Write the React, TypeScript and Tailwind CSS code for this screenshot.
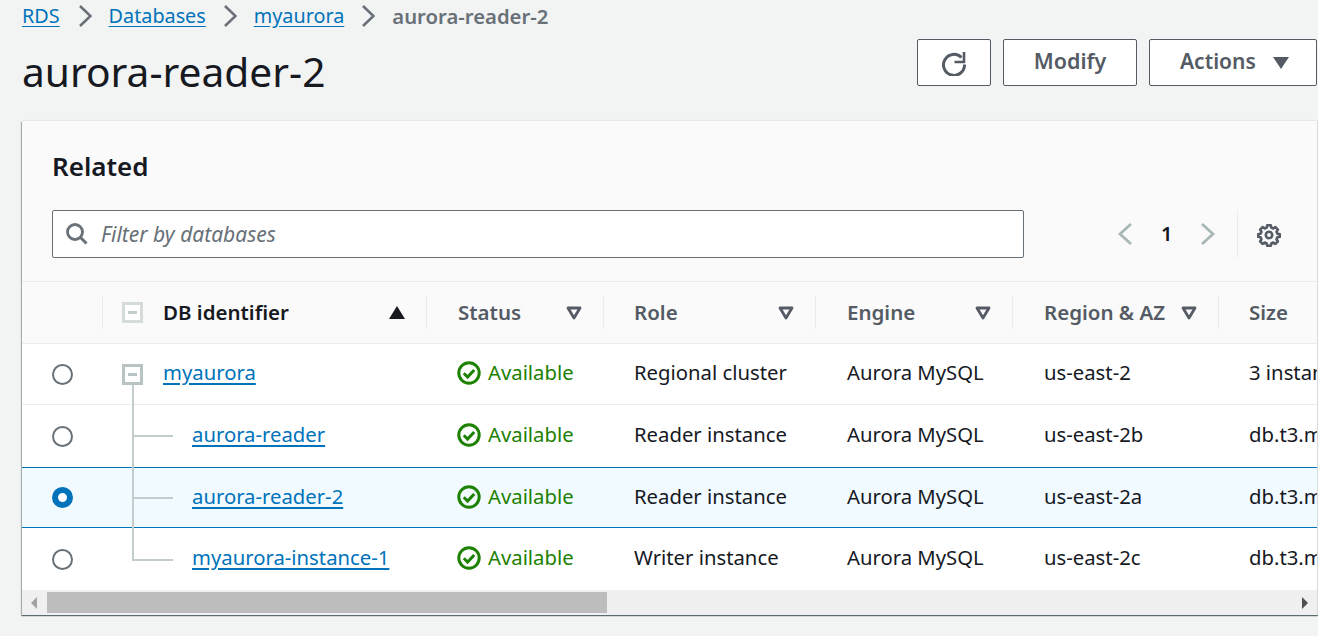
import type { ReactNode } from "react";

const font = "font-['Noto_Sans','Open_Sans',sans-serif]";

type Row = {
  id: string;
  role: string;
  az: string;
  size: string;
  rowClass: string;
  // tree line pieces, relative to the identifier cell
  trunk: string;
  branch?: string;
  selected?: boolean;
};

const rows: Row[] = [
  {
    id: "myaurora",
    role: "Regional cluster",
    az: "us-east-2",
    size: "3 instances",
    rowClass: "h-[61px] border-b border-[#eaeded] bg-white",
    trunk: "top-[40px] h-[21px]",
  },
  {
    id: "aurora-reader",
    role: "Reader instance",
    az: "us-east-2b",
    size: "db.t3.medium",
    rowClass: "h-[62px] bg-white",
    trunk: "top-0 h-[62px]",
    branch: "top-[30px]",
  },
  {
    id: "aurora-reader-2",
    role: "Reader instance",
    az: "us-east-2a",
    size: "db.t3.medium",
    rowClass: "h-[61px] border-y border-[#0073bb] bg-[#f1faff]",
    trunk: "top-[-1px] h-[61px]",
    branch: "top-[29px]",
    selected: true,
  },
  {
    id: "myaurora-instance-1",
    role: "Writer instance",
    az: "us-east-2c",
    size: "db.t3.medium",
    rowClass: "h-[62px] bg-white",
    trunk: "top-0 h-[33px]",
    branch: "top-[31px]",
  },
];

const columns = "grid grid-cols-[80px_324px_177px_212px_197px_206px_200px]";

function Chevron({ className = "" }: { className?: string }) {
  return (
    <svg width="14" height="22" viewBox="0 0 14 22" fill="none" className={`shrink-0 ${className}`}>
      <path d="M2 1l10.500 10L2 21" stroke="#687078" strokeWidth="2.600" />
    </svg>
  );
}

function FilterCaret() {
  return (
    <svg width="16" height="14" viewBox="0 0 16 14" fill="none" className="shrink-0">
      <path d="M2 2h12L8 12z" stroke="#545b64" strokeWidth="2.800" strokeLinejoin="round" />
    </svg>
  );
}

function TreeBox({ faded }: { faded?: boolean }) {
  return (
    <span
      className={`flex h-[21px] w-[21px] shrink-0 items-center justify-center border-[3px] bg-white ${
        faded ? "border-[#d5dbdb]" : "border-[#b8c4c4]"
      }`}>
      <span className={`h-[3px] w-[9px] ${faded ? "bg-[#c3cdcd]" : "bg-[#b8c4c4]"}`} />
    </span>
  );
}

function HeaderCell({ label, inset, last, children }: { label: string; inset: string; last?: boolean; children?: ReactNode }) {
  return (
    <div className={`relative flex h-[61px] items-center justify-between pr-[21px] ${inset}`}>
      <span className="absolute left-0 top-[14px] h-[33px] w-px bg-[#eaeded]" />
      <span className="text-[20.5px] font-semibold text-[#545b64]">{label}</span>
      {!last && (children ?? <FilterCaret />)}
    </div>
  );
}

function Radio({ checked }: { checked?: boolean }) {
  if (checked) {
    return <span className="block h-[21px] w-[21px] rounded-full border-[6px] border-[#0073bb] bg-white" />;
  }
  return <span className="block h-[21px] w-[21px] rounded-full border-2 border-[#687078] bg-white" />;
}

function Available() {
  return (
    <div className="flex items-center gap-[7px] text-[#1d8102]">
      <svg width="24" height="24" viewBox="0 0 24 24" fill="none" className="shrink-0">
        <circle cx="12" cy="12" r="10.200" stroke="#1d8102" strokeWidth="3" />
        <path d="M6.800 12.200l3.800 3.800 6.600-7" stroke="#1d8102" strokeWidth="3" />
      </svg>
      <span className="pb-[2px]">Available</span>
    </div>
  );
}

function TableRow({ row }: { row: Row }) {
  return (
    <div className={`${columns} ${row.rowClass} items-center text-[20.3px] leading-[28px] text-[#16191f]`}>
      <div className="pl-[30px]">
        <Radio checked={row.selected} />
      </div>
      <div className="relative flex h-full items-center">
        <span className={`absolute left-[30px] w-[2px] bg-[#c3cdcd] ${row.trunk}`} />
        {row.branch ? (
          <>
            <span className={`absolute left-[31px] h-[2px] w-[40px] bg-[#c3cdcd] ${row.branch}`} />
            <a className="pb-[4px] pl-[90px] text-[#0073bb] underline underline-offset-[3px]">{row.id}</a>
          </>
        ) : (
          <div className="flex items-center gap-[20px] pl-[20px]">
            <span className="relative">
              <TreeBox />
            </span>
            <a className="pb-[4px] text-[#0073bb] underline underline-offset-[3px]">{row.id}</a>
          </div>
        )}
      </div>
      <div className="pb-[2px] pl-[31px]">
        <Available />
      </div>
      <div className="pb-[4px] pl-[31px]">{row.role}</div>
      <div className="pb-[4px] pl-[32px]">Aurora MySQL</div>
      <div className="pb-[4px] pl-[32px]">{row.az}</div>
      <div className="whitespace-nowrap pb-[4px] pl-[31px]">{row.size}</div>
    </div>
  );
}

export default function App() {
  return (
    <div className={`${font} h-[636px] w-[1318px] overflow-hidden bg-[#f2f3f3] text-[#16191f]`}>
      <nav className="flex h-[32px] items-center gap-[17px] pl-[22px] text-[19.800px]">
        <a className="text-[#0073bb] underline underline-offset-[3px]">RDS</a>
        <Chevron className="ml-[1px]" />
        <a className="text-[#0073bb] underline underline-offset-[3px]">Databases</a>
        <Chevron />
        <a className="text-[#0073bb] underline underline-offset-[3px]">myaurora</a>
        <Chevron />
        <span className="text-[20.3px] font-semibold text-[#687078]">aurora-reader-2</span>
      </nav>

      <div className="flex h-[89px] items-start justify-between pl-[22px] pr-[1px]">
        <h1 className="mt-[13px] text-[40.700px] font-normal leading-[52px]">aurora-reader-2</h1>
        <div className="mt-[7px] flex gap-[12px]">
          <button
            type="button"
            className="flex h-[47px] w-[74px] items-center justify-center rounded-[2px] border border-[#545b64] bg-white">
            <svg width="26" height="26" viewBox="0 0 26 26" fill="none">
              <path d="M20.500 7.500A10.500 10.500 0 1 0 23.500 14.500" stroke="#545b64" strokeWidth="3" />
              <path d="M23 2v10h-9.500" stroke="#545b64" strokeWidth="2.600" />
            </svg>
          </button>
          <button
            type="button"
            className="h-[47px] w-[134px] rounded-[2px] border border-[#545b64] bg-white pb-[2px] text-[21.500px] font-semibold text-[#545b64]">
            Modify
          </button>
          <button
            type="button"
            className="flex h-[47px] w-[168px] items-center justify-between rounded-[2px] border border-[#545b64] bg-white pb-[2px] pl-[30px] pr-[27px] text-[21px] font-semibold text-[#545b64]">
            Actions
            <svg width="16" height="12" viewBox="0 0 16 12" className="mt-[2px]">
              <path d="M0 0h16L8 12z" fill="#545b64" />
            </svg>
          </button>
        </div>
      </div>

      <section className="ml-[22px] h-[494px] w-[1296px] overflow-hidden border-r border-[#d5dbdb] bg-white shadow-[0_1px_1px_0_rgba(0,28,36,0.5),-1px_1px_1px_0_rgba(0,28,36,0.25),0_-1px_1px_0_rgba(0,28,36,0.05)]">
        <div className="h-[161px] border-b border-[#eaeded] bg-[#fafafa] pl-[30px] pt-[27px]">
          <h2 className="text-[26px] font-semibold leading-[36px] text-[#16191f]">Related</h2>
          <div className="mt-[26px] flex items-center">
            <div className="flex h-[48px] w-[972px] items-center gap-[12px] rounded-[2px] border border-[#687078] bg-white pl-[12px]">
              <svg width="24" height="24" viewBox="0 0 24 24" fill="none" className="shrink-0">
                <circle cx="10" cy="10" r="7.500" stroke="#687078" strokeWidth="2.800" />
                <path d="M15.500 15.500l6 6" stroke="#687078" strokeWidth="3" />
              </svg>
              <span className="pt-[1px] text-[21px] italic text-[#687078]">Filter by databases</span>
            </div>
            <div className="ml-[92px] flex items-center gap-[27px]">
              <svg width="18" height="24" viewBox="0 0 18 24" fill="none">
                <path d="M15 2L4 12l11 10" stroke="#aab7b8" strokeWidth="2.800" />
              </svg>
              <span className="text-[20px] font-semibold text-[#16191f]">1</span>
              <svg width="18" height="24" viewBox="0 0 18 24" fill="none">
                <path d="M3 2l11 10L3 22" stroke="#aab7b8" strokeWidth="2.800" />
              </svg>
            </div>
            <div className="ml-[20px] flex h-[48px] items-center border-l border-[#eaeded] pl-[19px]">
              <svg width="24" height="24" viewBox="0 0 24 24" fill="none" className="mt-[2px]">
                <path
                  d="M10 1.800h4l.6 2.700 2.300 1 2.400-1.500 2.800 2.800-1.500 2.400 1 2.300 2.700.6v2.800l-2.700.6-1 2.300 1.500 2.400-2.800 2.800-2.400-1.500-2.300 1-.6 2.700h-4l-.6-2.700-2.300-1-2.400 1.500-2.800-2.800 1.500-2.400-1-2.300-2.700-.6v-2.800l2.700-.6 1-2.300-1.500-2.400 2.800-2.800 2.400 1.500 2.300-1z"
                  transform="translate(12 12) scale(0.88) translate(-12 -12.900)"
                  stroke="#545b64"
                  strokeWidth="3"
                  strokeLinejoin="round"
                />
                <circle cx="12" cy="12" r="3.200" stroke="#545b64" strokeWidth="2.600" />
              </svg>
            </div>
          </div>
        </div>

        <div className={`${columns} h-[62px] border-b border-[#eaeded] bg-[#fafafa]`}>
          <div />
          <div className="relative flex h-[61px] items-center justify-between pl-[20px] pr-[21px]">
            <span className="absolute left-0 top-[14px] h-[33px] w-px bg-[#eaeded]" />
            <div className="flex items-center gap-[20px]">
              <TreeBox faded />
              <span className="text-[20.5px] font-semibold text-[#16191f]">DB identifier</span>
            </div>
            <svg width="16" height="13" viewBox="0 0 16 13">
              <path d="M8 0l8 13H0z" fill="#16191f" />
            </svg>
          </div>
          <HeaderCell label="Status" inset="pl-[32px]" />
          <HeaderCell label="Role" inset="pl-[31px]" />
          <HeaderCell label="Engine" inset="pl-[32px]" />
          <HeaderCell label="Region & AZ" inset="pl-[32px]" />
          <HeaderCell label="Size" inset="pl-[31px]" last />
        </div>

        {rows.map((row) => (
          <TableRow key={row.id} row={row} />
        ))}

        <div className="flex h-[25px] items-center bg-[#f0f0f0]">
          <svg width="25" height="12" viewBox="0 0 25 12" className="shrink-0">
            <path d="M15 0v12L9 6z" fill="#a3a3a3" />
          </svg>
          <div className="h-[21px] w-[560px] bg-[#bdbdbd]" />
          <div className="flex-1" />
          <svg width="20" height="12" viewBox="0 0 20 12" className="shrink-0">
            <path d="M5 0v12l6-6z" fill="#505050" />
          </svg>
        </div>
      </section>
    </div>
  );
}
